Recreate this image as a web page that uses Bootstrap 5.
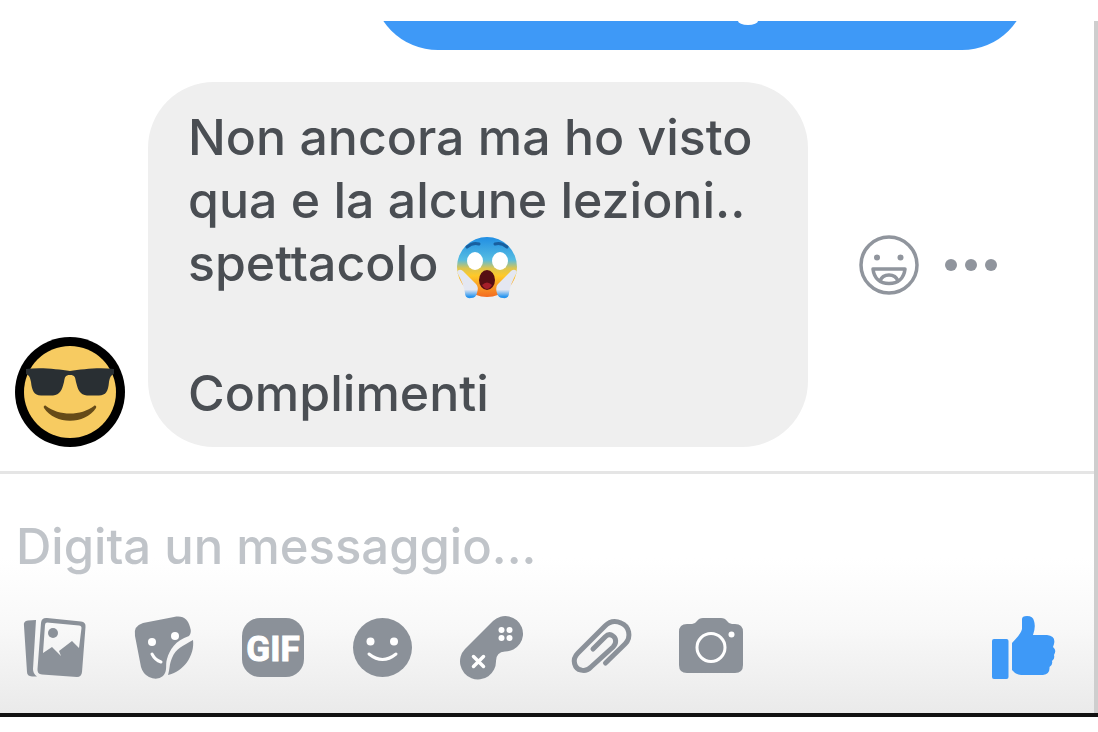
<!DOCTYPE html>
<html lang="it">
<head>
<meta charset="utf-8">
<meta name="viewport" content="width=device-width, initial-scale=1">
<title>Chat</title>
<link href="https://cdn.jsdelivr.net/npm/bootstrap@5.3.0/dist/css/bootstrap.min.css" rel="stylesheet">
<style>
  body { font-family: Inter, "Liberation Sans", sans-serif; background: #fff; color: #4a4e53; }
  .chat-window { margin-top: 21px; border-right: 4px solid #cecece; }
  .chat-end { height: 4px; background: #111; }
  .sent-clip { height: 29px; margin-right: 66px; }
  .sent-bubble { width: 656px; height: 140px; border-radius: 66px; background: #3e99f7; }
  .letter-tail { top: 0; right: 270px; width: 20px; height: 4px; border-radius: 0 0 10px 10px / 0 0 4px 4px; background: #fff; }
  .received { margin-top: 32px; padding: 0 16px 24px 15px; gap: 23px; }
  .received-bubble { width: 660px; padding: 24px 40px 22px; border-radius: 66px; background: #efefef; font-size: 50px; font-weight: 450; line-height: 63px; }
  .received-bubble p + p { margin-top: 67px; }
  .emoji { width: 62px; height: 62px; margin: -8px 0 -6px 4px; vertical-align: -12px; }
  .message-tools { gap: 26px; margin-left: 28px; color: #90959d; }
  .composer { border-top: 3px solid #e5e5e5; padding: 41px 38px 33px 0; background: linear-gradient(#fff 35%, #f8f8f8 65%, #eaeaea); }
  .composer input, .composer input:focus { background: transparent; box-shadow: none; color: #4a4e53; font-size: 49px; font-weight: 500; line-height: 64px; padding: 0 16px; }
  .composer input::placeholder { color: #c0c4c9; opacity: 1; }
  .toolbar { margin-top: 37px; padding-left: 23px; gap: 45px; color: #8b9199; }
  .toolbar .btn, .message-tools .btn { color: inherit; }
  .toolbar .like { color: #3e99f7; }
  .gif-label { font: bold 35px Roboto, sans-serif; stroke: #fff; stroke-width: 1px; }
  svg { display: block; overflow: visible; }
  svg.emoji { display: inline-block; }
</style>
</head>
<body>
<main class="chat-window">
  <section aria-label="Messaggi">
    <div class="sent-clip position-relative overflow-hidden d-flex justify-content-end align-items-end">
      <div class="sent-bubble flex-shrink-0"></div>
      <span class="letter-tail position-absolute"></span>
    </div>
    <div class="received d-flex align-items-end">
      <svg class="flex-shrink-0" width="110" height="110" viewBox="0 0 110 110" role="img" aria-label="Avatar">
        <circle cx="55" cy="55" r="55" fill="#000"/>
        <circle cx="55" cy="55" r="46" fill="#f7cb61"/>
        <path d="M11 32C25 30 43 32 55 34C67 32 85 30 99 32V37C96 38 95 40 94 45C93 55 91 58 84 58.500H72C65 58 63 53 61 45C60 40 60 38 55 38S50 40 49 45C47 53 45 58 38 58.500H26C19 58 17 54 16 45C15 40 14 38 11 37Z" fill="#292f33"/>
        <path d="M31 69C44 79 66 79 79 69C80 68 82 69 81 71C70 88 40 88 29 71C28 69 30 68 31 69Z" fill="#664b18"/>
      </svg>
      <div class="received-bubble">
        <p class="mb-0">Non ancora ma ho visto<br>qua e la alcune lezioni..<br>spettacolo <svg class="emoji" viewBox="0 0 62 62" role="img" aria-label="Faccina che urla">
          <defs>
            <linearGradient id="face" x1="0" y1="0" x2="0" y2="1"><stop offset="0" stop-color="#218ee3"/><stop offset=".38" stop-color="#55bce2"/><stop offset=".52" stop-color="#dbc551"/><stop offset=".65" stop-color="#ffc928"/><stop offset="1" stop-color="#f36a21"/></linearGradient>
            <linearGradient id="hand" x1="0" y1="0" x2="0" y2="1"><stop offset=".7" stop-color="#e4e7f1"/><stop offset=".95" stop-color="#2795ef"/></linearGradient>
          </defs>
          <circle cx="31" cy="30" r="30" fill="url(#face)"/>
          <path d="M11 10Q17 5 23 7M51 10Q45 5 39 7" fill="none" stroke="#185f9f" stroke-width="3" stroke-linecap="round"/>
          <ellipse cx="19" cy="24" rx="8" ry="9" fill="#fff"/><ellipse cx="44" cy="24" rx="8" ry="9" fill="#fff"/>
          <ellipse cx="31" cy="43" rx="8" ry="10" fill="#560e13"/><path d="M26 48Q31 43 36 48Q31 56 26 48Z" fill="#a51e2a"/>
          <path d="M1 35Q3 31 7 34L20 47Q23 50 21 56Q20 61 15 61Q9 62 9 56Q8 48 1 35Z" fill="url(#hand)"/>
          <path d="M61 35Q59 31 55 34L42 47Q39 50 41 56Q42 61 47 61Q53 62 53 56Q54 48 61 35Z" fill="url(#hand)"/>
        </svg></p>
        <p class="mb-0">Complimenti</p>
      </div>
      <div class="message-tools d-flex align-items-center align-self-center">
        <button type="button" class="btn p-0 border-0" aria-label="Reagisci">
          <svg width="60" height="60" viewBox="0 0 60 60" fill="none" stroke="currentColor" stroke-width="3.500">
            <circle cx="30" cy="30" r="28"/><circle cx="18" cy="22.500" r="3" fill="currentColor" stroke="none"/><circle cx="41.500" cy="22.500" r="3" fill="currentColor" stroke="none"/>
            <path d="M14 34H46C45 43 39 48.500 30 48.500S15 43 14 34ZM21 46C24 38 36 38 39 46" stroke-linejoin="round"/>
          </svg>
        </button>
        <button type="button" class="btn p-0 border-0" aria-label="Altro">
          <svg width="52" height="12" viewBox="0 0 52 12" fill="currentColor"><circle cx="6" cy="6" r="6"/><circle cx="26" cy="6" r="6"/><circle cx="46" cy="6" r="6"/></svg>
        </button>
      </div>
    </div>
  </section>
  <form class="composer">
    <input type="text" class="form-control border-0 rounded-0" placeholder="Digita un messaggio..." aria-label="Messaggio">
    <div class="toolbar d-flex">
      <button type="button" class="btn p-0 border-0" aria-label="Foto">
        <svg width="64" height="64" viewBox="0 0 64 64" fill="currentColor">
          <path d="M1 10Q0 5 5 4.500L13 4L10 53Q10 58 14 60.500H9Q4 60 4 56Z"/>
          <path fill-rule="evenodd" d="M24 2L58 5.500Q63 6 62.500 11L59 56Q58.500 61 54 61L19 58.500Q14 58 14.500 53L18 7Q18.500 1.500 24 2ZM24 6.500Q22 6.500 22 9L20 37L29 31L38 40L36 35L49 25L56 32L58.500 12Q58.500 9.500 56 9.500Z"/><circle cx="30" cy="17" r="5"/>
        </svg>
      </button>
      <button type="button" class="btn p-0 border-0" aria-label="Adesivi">
        <svg width="64" height="64" viewBox="0 0 64 64">
          <path fill="currentColor" d="M3 20Q1 10 11 7L42 1C52-1 56 4 58 11Q60 17 57 20C43 25 38 33 35 43C33 49 36 55 31 60Q25 65 17 61Q11 58 9 51Z"/>
          <path fill="currentColor" d="M61 24C63 40 51 56 36 59C38 53 37 49 40 42C44 32 51 30 61 24Z"/>
          <circle cx="20" cy="26" r="4" fill="#fff"/><circle cx="43" cy="20" r="4" fill="#fff"/><path d="M20 38Q23 44 29 46" fill="none" stroke="#fff" stroke-width="3" stroke-linecap="round"/>
        </svg>
      </button>
      <button type="button" class="btn p-0 border-0" aria-label="GIF">
        <svg width="64" height="64" viewBox="0 0 64 64"><rect x="1" y="2" width="62" height="59" rx="18" fill="currentColor"/><text class="gif-label" x="32" y="45" text-anchor="middle" fill="#fff">GIF</text></svg>
      </button>
      <button type="button" class="btn p-0 border-0" aria-label="Emoji">
        <svg width="64" height="64" viewBox="0 0 64 64"><circle cx="32.500" cy="31.500" r="29.500" fill="currentColor"/><circle cx="20.500" cy="25.500" r="4" fill="#fff"/><circle cx="44" cy="25.500" r="4" fill="#fff"/><path d="M19 38Q32.500 49 46 38" fill="none" stroke="#fff" stroke-width="3" stroke-linecap="round"/></svg>
      </button>
      <button type="button" class="btn p-0 border-0" aria-label="Giochi">
        <svg width="64" height="64" viewBox="0 0 64 64">
          <path fill="currentColor" d="M34 5A17.700 17.700 0 1 1 46 35.400Q37 36 37 45A18 18 0 1 1 6 33Z"/>
          <g fill="#fff"><circle cx="42.500" cy="14" r="3"/><circle cx="50.500" cy="14" r="3"/><circle cx="42.500" cy="22" r="3"/><circle cx="50.500" cy="22" r="3"/></g>
          <path d="M14.500 40.500L24.500 50.500M24.500 40.500L14.500 50.500" stroke="#fff" stroke-width="3.500" stroke-linecap="round"/>
        </svg>
      </button>
      <button type="button" class="btn p-0 border-0" aria-label="Allegato">
        <svg width="64" height="64" viewBox="0 0 64 64" fill="none" stroke="currentColor" stroke-width="5" stroke-linecap="round"><path d="M37.500 47L57 28C64 21 61 10 53 7Q44 3 37 10L10 37C3 44 7 53 13 54Q18 56 23 51L45 31C49 27 48 22 45 20Q41 17 37 21L25 33"/></svg>
      </button>
      <button type="button" class="btn p-0 border-0" aria-label="Fotocamera">
        <svg width="64" height="64" viewBox="0 0 64 64"><path fill="currentColor" d="M10 8H15Q18 8 20 5Q22 2 26 2H44Q48 2 50 5Q52 8 55 8H58Q66 8 66 16V49Q66 57 58 57H10Q2 57 2 49V16Q2 8 10 8Z"/><circle cx="34" cy="31.500" r="14" fill="none" stroke="#fff" stroke-width="3"/><circle cx="54.500" cy="18.500" r="3" fill="#fff"/></svg>
      </button>
      <button type="button" class="btn like p-0 border-0 ms-auto" aria-label="Mi piace">
        <svg width="64" height="64" viewBox="0 0 64 64" fill="currentColor"><rect y="23" width="16.500" height="40" rx="2"/><path d="M20 27Q29 18 30 13V3Q30 0 35 0Q41 0 42 5Q44 11 41 19H55Q64 20 62 28L61 31Q65 34 62 39Q63 43 60 45Q61 49 57.500 51Q58 58 51 59H29Q24 59 20 54Z"/></svg>
      </button>
    </div>
  </form>
</main>
<div class="chat-end"></div>
<script src="https://cdn.jsdelivr.net/npm/bootstrap@5.3.0/dist/js/bootstrap.bundle.min.js"></script>
</body>
</html>
